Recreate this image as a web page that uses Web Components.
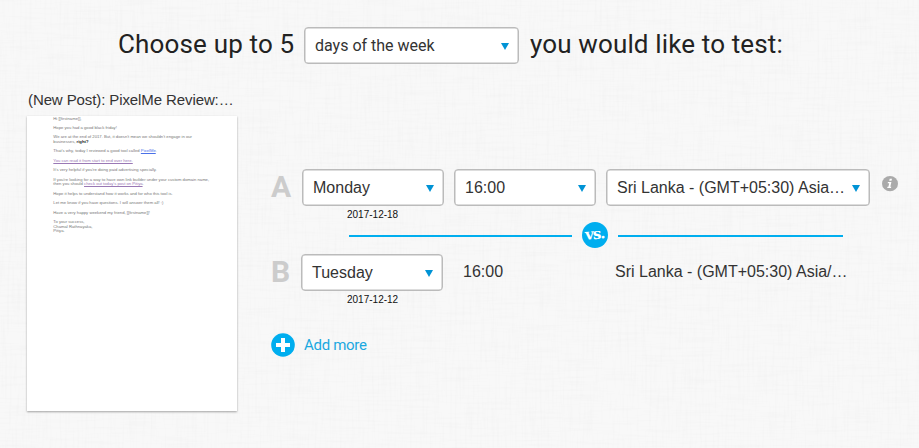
<!DOCTYPE html>
<html lang="en">
<head>
<meta charset="utf-8">
<title>Split test</title>
<style>
  body {
    margin: 0;
    background: #f8f8f8;
    color: #333;
    font-family: "Liberation Sans", Arial, sans-serif;
  }
</style>
</head>
<body>
<split-test>
  <test-heading slot="heading"></test-heading>
  <mail-preview slot="preview" subject="(New Post): PixelMe Review:…"></mail-preview>
  <test-variants slot="variants"></test-variants>
</split-test>

<script>
class SelectBox extends HTMLElement {
  constructor() {
    super();
    this.attachShadow({ mode: 'open' }).innerHTML = `
      <style>
        :host {
          display: flex;
          flex: none;
          align-items: center;
          justify-content: space-between;
          box-sizing: border-box;
          height: 37px;
          padding: 0 9px 0 10px;
          border: 1px solid #bbb;
          border-radius: 4px;
          background: #fff;
          box-shadow: inset 0 0 0 .5px #bbb;
          color: #333;
          font-size: 16px;
          line-height: 20px;
          white-space: nowrap;
        }
        svg {
          flex: none;
          width: 8px;
          height: 7px;
          margin-top: 1px;
          fill: #0093d5;
        }
      </style>
      <span><slot></slot></span>
      <svg viewBox="0 0 8 7"><path d="M0 0h8L4 7z"/></svg>
    `;
  }
}

class TestHeading extends HTMLElement {
  constructor() {
    super();
    this.attachShadow({ mode: 'open' }).innerHTML = `
      <style>
        :host {
          display: flex;
          align-items: center;
          height: 37px;
          padding: 27px 0 0 118px;
          color: #222;
          font-family: Roboto, sans-serif;
          font-size: 26px;
          line-height: 34px;
          white-space: nowrap;
        }
        .before { width: 186px; letter-spacing: .16px; }
        .after { margin-left: 11px; letter-spacing: .14px; }
        .text { padding-bottom: 3px; }
        select-box { width: 215px; }
      </style>
      <span class="text before">Choose up to 5</span>
      <select-box>days of the week</select-box>
      <span class="text after">you would like to test:</span>
    `;
  }
}

class MailPreview extends HTMLElement {
  constructor() {
    super();
    this.attachShadow({ mode: 'open' });
  }

  connectedCallback() {
    this.shadowRoot.innerHTML = `
      <style>
        :host { display: block; width: 210px; }
        h2 {
          margin: 0 0 7px 1px;
          font-size: 15px;
          font-weight: normal;
          letter-spacing: -.1px;
          line-height: 18px;
          white-space: nowrap;
        }
        .sheet {
          box-sizing: border-box;
          height: 295px;
          padding: .6px 0 0 26.3px;
          background: #fff;
          box-shadow: 0 1px 2px rgba(0, 0, 0, .35);
          color: #777;
          font-size: 4.2px;
          line-height: 4.7px;
          white-space: nowrap;
        }
        p { margin: 0 0 4.7px; }
        b { color: #222; }
        a { color: #9a78b5; text-decoration: underline; text-decoration-thickness: .5px; }
        a.new { color: #4a70e8; }
      </style>
      <h2>${this.getAttribute('subject')}</h2>
      <div class="sheet">
        <p>Hi [[firstname]],</p>
        <p>Hope you had a good black friday!</p>
        <p>We are at the end of 2017. But, it doesn't mean we shouldn't engage in our<br>businesses, <b>right?</b></p>
        <p>That's why, today I reviewed a good tool called <a class="new">PixelMe</a>.</p>
        <p><a>You can read it from start to end over here.</a></p>
        <p>It's very helpful if you're doing paid advertising specially.</p>
        <p>If you're looking for a way to have own link builder under your custom domain name,<br>then you should <a>check out today's post on Pitiya</a>.</p>
        <p>Hope it helps to understand how it works and for who this tool is.</p>
        <p>Let me know if you have questions. I will answer them all! :)</p>
        <p>Have a very happy weekend my friend, [[firstname]]!</p>
        <p>To your success,<br>Chamal Rathnayaka,<br>Pitiya.</p>
      </div>
    `;
  }
}

class VariantRow extends HTMLElement {
  constructor() {
    super();
    this.attachShadow({ mode: 'open' });
  }

  connectedCallback() {
    this.shadowRoot.innerHTML = `
      <style>
        :host { display: flex; height: 52px; font-size: 16px; }
        .letter {
          width: var(--letter-width, 31px);
          color: #ccc;
          font-family: Roboto, sans-serif;
          font-size: 30px;
          font-weight: bold;
          line-height: 35px;
        }
        .day { display: flex; flex-direction: column; width: 142px; }
        .date {
          padding: 3px 0 0 var(--date-indent, 45px);
          color: #111;
          font-size: 10px;
          line-height: 12px;
        }
      </style>
      <div class="letter">${this.getAttribute('letter')}</div>
      <div class="day">
        <select-box>${this.getAttribute('day')}</select-box>
        <div class="date">${this.getAttribute('date')}</div>
      </div>
      <slot></slot>
    `;
  }
}

class VersusDivider extends HTMLElement {
  constructor() {
    super();
    this.attachShadow({ mode: 'open' }).innerHTML = `
      <style>
        :host { display: flex; align-items: center; gap: 10px; }
        i { flex: none; height: 2px; width: 223px; margin-top: 2px; background: #00aeef; }
        i + div + i { width: 225px; }
        .badge {
          display: flex;
          flex: none;
          align-items: center;
          justify-content: center;
          width: 26px;
          height: 26px;
          border-radius: 50%;
          background: #00aeef;
          color: #fff;
          font: bold 15px/14px "DejaVu Serif", serif;
          letter-spacing: -1px;
        }
        span { transform: translateY(-1px) rotate(-5deg); }
      </style>
      <i></i><div class="badge"><span>vs.</span></div><i></i>
    `;
  }
}

class InfoIcon extends HTMLElement {
  constructor() {
    super();
    this.attachShadow({ mode: 'open' }).innerHTML = `
      <style>
        :host { display: block; width: 16px; height: 16px; }
        svg { display: block; }
      </style>
      <svg width="16" height="16" viewBox="0 0 16 16">
        <ellipse cx="8" cy="7.7" rx="8" ry="7.6" fill="#aaa"/>
        <path d="M7.7 2.7H10l-.5 2.1H7.2zM5.9 6h3.5l-1.1 4.7h1L9 11.9H5.2l.3-1.2h.9l.8-3.5H5.7z" fill="#fff"/>
      </svg>
    `;
  }
}

class AddMore extends HTMLElement {
  constructor() {
    super();
    this.attachShadow({ mode: 'open' }).innerHTML = `
      <style>
        :host {
          display: flex;
          align-items: center;
          gap: 9px;
          color: #1ba8e0;
          font: 15px/24px Roboto, sans-serif;
          letter-spacing: -.3px;
        }
        span { padding-top: 1px; }
      </style>
      <svg width="24" height="24" viewBox="0 0 24 24">
        <circle cx="12" cy="12" r="11.8" fill="#00aeef"/>
        <path d="M10 5h4v5h5v4h-5v5h-4v-5H5v-4h5z" fill="#fff"/>
      </svg>
      <span><slot></slot></span>
    `;
  }
}

class TestVariants extends HTMLElement {
  constructor() {
    super();
    this.attachShadow({ mode: 'open' }).innerHTML = `
      <style>
        :host { display: block; }
        .time { width: 142px; margin-left: 10px; }
        .zone { width: 264px; margin-left: 10px; }
        info-icon { margin: 7px 0 0 12px; }
        .text { line-height: 35px; }
        .b-time { width: 152px; margin-left: 20px; }
        versus-divider { margin: 1px 0 6px 78px; }
        .b { --letter-width: 30px; --date-indent: 46px; }
        add-more { margin: 26px 0 0; }
      </style>
      <variant-row letter="A" day="Monday" date="2017-12-18">
        <select-box class="time">16:00</select-box>
        <select-box class="zone">Sri Lanka - (GMT+05:30) Asia…</select-box>
        <info-icon></info-icon>
      </variant-row>
      <versus-divider></versus-divider>
      <variant-row class="b" letter="B" day="Tuesday" date="2017-12-12">
        <span class="text b-time">16:00</span>
        <span class="text">Sri Lanka - (GMT+05:30) Asia/…</span>
      </variant-row>
      <add-more>Add more</add-more>
    `;
  }
}

class SplitTest extends HTMLElement {
  constructor() {
    super();
    // crossed stretched noise gives the woven paper look
    this.attachShadow({ mode: 'open' }).innerHTML = `
      <style>
        :host { display: grid; height: 448px; overflow: hidden; }
        .weave, main { grid-area: 1 / 1; }
        .weave { display: block; }
        main { z-index: 1; }
        .columns { display: flex; padding: 27px 0 0 27px; }
        .variants { padding: 78px 0 0 34px; }
      </style>
      <svg class="weave" width="919" height="448">
        <filter id="across" x="0" y="0" width="1" height="1">
          <feTurbulence type="fractalNoise" baseFrequency=".025 .4" numOctaves="2" seed="4"/>
          <feColorMatrix values="0 0 0 0 .5  0 0 0 0 .5  0 0 0 0 .5  .12 0 0 0 -.055"/>
        </filter>
        <filter id="down" x="0" y="0" width="1" height="1">
          <feTurbulence type="fractalNoise" baseFrequency=".4 .025" numOctaves="2" seed="9"/>
          <feColorMatrix values="0 0 0 0 .5  0 0 0 0 .5  0 0 0 0 .5  .12 0 0 0 -.055"/>
        </filter>
        <rect width="919" height="448" filter="url(#across)"/>
        <rect width="919" height="448" filter="url(#down)"/>
      </svg>
      <main>
        <slot name="heading"></slot>
        <div class="columns">
          <slot name="preview"></slot>
          <div class="variants"><slot name="variants"></slot></div>
        </div>
      </main>
    `;
  }
}

customElements.define('select-box', SelectBox);
customElements.define('info-icon', InfoIcon);
customElements.define('add-more', AddMore);
customElements.define('versus-divider', VersusDivider);
customElements.define('variant-row', VariantRow);
customElements.define('test-heading', TestHeading);
customElements.define('mail-preview', MailPreview);
customElements.define('test-variants', TestVariants);
customElements.define('split-test', SplitTest);
</script>
</body>
</html>
